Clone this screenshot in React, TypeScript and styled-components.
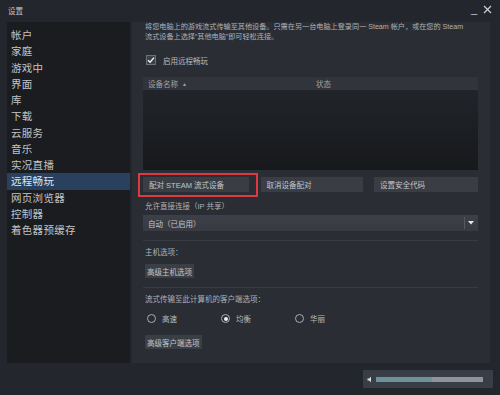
import styled, { createGlobalStyle } from "styled-components";

const GlobalStyle = createGlobalStyle`
  html, body {
    margin: 0;
    padding: 0;
    background: #22252b;
  }
  body {
    font-family: "Liberation Sans", "Noto Sans CJK SC", sans-serif;
    color: #b9bcc1;
  }
`;

const Window = styled.div`
  width: 500px;
  height: 395px;
  display: flex;
  flex-direction: column;
  background: #23262c;
  overflow: hidden;
`;

const TitleBar = styled.div`
  height: 22px;
  display: flex;
  align-items: center;
  justify-content: space-between;
  padding: 0 8px 2px 8px;
  box-sizing: border-box;
  font-size: 7.5px;
  color: #c3c5c9;
`;

const WinControls = styled.div`
  display: flex;
  align-items: center;
  gap: 6px;
  color: #c9cbcf;
  font-size: 11px;
  margin-top: -2px;
`;

const Body = styled.div`
  flex: 1;
  display: flex;
  gap: 2px;
  padding: 0 10px 0 7px;
  min-height: 0;
`;

const Sidebar = styled.ul`
  list-style: none;
  margin: 0;
  padding: 5px 0 0;
  width: 123px;
  background: #1a1c20;
`;

const NavItem = styled.li<{ $active?: boolean }>`
  height: 16.25px;
  line-height: 16.25px;
  padding-left: 4px;
  font-size: 10.5px;
  letter-spacing: 0.3px;
  color: ${(p) => (p.$active ? "#dfe3e8" : "#c2c4c8")};
  background: ${(p) => (p.$active ? "#29405f" : "transparent")};
`;

const Content = styled.div`
  flex: 1;
  background: #2a2d34;
  padding: 0 12px 0 11px;
  display: flex;
  flex-direction: column;
  align-items: stretch;
  font-size: 7.5px;
  color: #aeb1b6;
  white-space: nowrap;
`;

const Desc = styled.p`
  margin: 0 0 0 2px;
  line-height: 10px;
  font-size: 7.2px;
  letter-spacing: -0.05px;
`;

const Label = styled.div<{ $mt: number }>`
  margin: ${(p) => p.$mt}px 0 0 2px;
  line-height: 10px;
`;

const CheckRow = styled.label`
  margin: 13px 0 0 3px;
  height: 10px;
  display: flex;
  align-items: center;
  gap: 7px;
  color: #b7babf;
`;

const CheckBox = styled.span`
  width: 10px;
  height: 10px;
  box-sizing: border-box;
  background: #3c4048;
  border: 1px solid #6b7079;
  display: flex;
  align-items: center;
  justify-content: center;
`;

const Table = styled.div`
  margin-top: 12px;
  display: flex;
  flex-direction: column;
`;

const TableHead = styled.div`
  height: 13px;
  display: grid;
  grid-template-columns: 168px 1fr;
  align-items: center;
  background: #31343b;
  padding-left: 5px;
  color: #9ea2a8;
`;

const TableBody = styled.div`
  height: 80px;
  background: linear-gradient(#212429, #17191c);
`;

const SortArrow = styled.span`
  font-size: 5px;
  margin-left: 4px;
  vertical-align: 1px;
`;

const ButtonRow = styled.div`
  margin-top: 7px;
  display: grid;
  grid-template-columns: 106px 102px 104px;
  justify-content: space-between;
`;

const Button = styled.button<{ $marked?: boolean }>`
  position: relative;
  height: 15px;
  border: none;
  background: #3a3d44;
  color: #c3c6cb;
  font-family: inherit;
  font-size: 7.5px;
  text-align: left;
  white-space: nowrap;
  padding: 0 0 0 6px;
  &::after {
    content: "";
    display: ${(p) => (p.$marked ? "block" : "none")};
    position: absolute;
    left: -5px;
    right: -9px;
    top: -4px;
    bottom: -5px;
    border: 2px solid #dc3a40;
  }
`;

const SmallButton = styled(Button)<{ $mt: number }>`
  align-self: flex-start;
  height: 14px;
  margin: ${(p) => p.$mt}px 0 0 2px;
  padding: 0 2px;
  background: #3a3e45;
`;

const Select = styled.div`
  margin-top: 3px;
  height: 16px;
  display: flex;
  align-items: center;
  background: linear-gradient(#3d4048, #373a41);
  color: #c1c4c9;
`;

const SelectValue = styled.span`
  flex: 1;
  padding-left: 5px;
`;

const SelectArrow = styled.span`
  width: 12px;
  height: 12px;
  display: flex;
  align-items: center;
  justify-content: center;
  border-left: 1px solid #55585f;
  margin-right: 1px;
`;

const Divider = styled.hr<{ $mt: number }>`
  margin: ${(p) => p.$mt}px 0 0;
  border: none;
  height: 1px;
  background: #373a41;
`;

const RadioRow = styled.div`
  margin-top: 8px;
  height: 10px;
  display: grid;
  grid-template-columns: 74px 74px 1fr;
  padding-left: 4px;
`;

const RadioOption = styled.label`
  display: flex;
  align-items: center;
  gap: 6px;
  color: #b7babf;
`;

const RadioDot = styled.span<{ $on?: boolean }>`
  width: 9px;
  height: 9px;
  box-sizing: border-box;
  border-radius: 50%;
  border: 1.3px solid #a9adb3;
  display: flex;
  align-items: center;
  justify-content: center;
  &::after {
    content: "";
    width: 4px;
    height: 4px;
    border-radius: 50%;
    background: #f2f3f5;
    display: ${(p) => (p.$on ? "block" : "none")};
  }
`;

const Footer = styled.div`
  height: 32px;
  display: flex;
  justify-content: flex-end;
  padding: 7px 7px 0 0;
  box-sizing: border-box;
`;

const Progress = styled.div`
  width: 130px;
  height: 18px;
  background: #393d45;
  display: flex;
  align-items: center;
  gap: 3px;
  padding: 0 10px 0 4px;
  box-sizing: border-box;
`;

const Track = styled.div`
  flex: 1;
  height: 5px;
  background: #8d949e;
  display: flex;
`;

const Fill = styled.div`
  height: 100%;
  background: #6c9498;
`;

const navItems = [
  "帐户",
  "家庭",
  "游戏中",
  "界面",
  "库",
  "下载",
  "云服务",
  "音乐",
  "实况直播",
  "远程畅玩",
  "网页浏览器",
  "控制器",
  "着色器预缓存",
];

export default function App() {
  const progress = 52;
  return (
    <>
      <GlobalStyle />
      <Window>
        <TitleBar>
          <span>设置</span>
          <WinControls>
            <span>_</span>
            <svg width="9" height="9" viewBox="0 0 9 9">
              <path d="M1 1 L8 8 M8 1 L1 8" stroke="#c9cbcf" strokeWidth="1.3" />
            </svg>
          </WinControls>
        </TitleBar>
        <Body>
          <Sidebar>
            {navItems.map((n) => (
              <NavItem key={n} $active={n === "远程畅玩"}>
                {n}
              </NavItem>
            ))}
          </Sidebar>
          <Content>
            <Desc>
              将您电脑上的游戏流式传输至其他设备。只需在另一台电脑上登录同一 Steam 帐户，或在您的 Steam
              <br />
              流式设备上选择“其他电脑”即可轻松连接。
            </Desc>
            <CheckRow>
              <CheckBox>
                <svg width="8" height="8" viewBox="0 0 8 8">
                  <path d="M1 4.2 L3.1 6.3 L7 1.6" fill="none" stroke="#f4f5f6" strokeWidth="1.4" />
                </svg>
              </CheckBox>
              启用远程畅玩
            </CheckRow>
            <Table>
              <TableHead>
                <span>
                  设备名称<SortArrow>▲</SortArrow>
                </span>
                <span>状态</span>
              </TableHead>
              <TableBody />
            </Table>
            <ButtonRow>
              <Button $marked>配对 STEAM 流式设备</Button>
              <Button>取消设备配对</Button>
              <Button>设置安全代码</Button>
            </ButtonRow>
            <Label $mt={10}>允许直接连接（IP 共享）</Label>
            <Select>
              <SelectValue>自动（已启用）</SelectValue>
              <SelectArrow>
                <svg width="6" height="4" viewBox="0 0 6 4">
                  <path d="M0 0 H6 L3 3.5 Z" fill="#e6e7e9" />
                </svg>
              </SelectArrow>
            </Select>
            <Divider $mt={9} />
            <Label $mt={7}>主机选项：</Label>
            <SmallButton $mt={6}>高级主机选项</SmallButton>
            <Divider $mt={9} />
            <Label $mt={7}>流式传输至此计算机的客户端选项：</Label>
            <RadioRow>
              <RadioOption>
                <RadioDot />
                高速
              </RadioOption>
              <RadioOption>
                <RadioDot $on />
                均衡
              </RadioOption>
              <RadioOption>
                <RadioDot />
                华丽
              </RadioOption>
            </RadioRow>
            <SmallButton $mt={12}>高级客户端选项</SmallButton>
          </Content>
        </Body>
        <Footer>
          <Progress>
            <svg width="6" height="7" viewBox="0 0 6 7">
              <path d="M0.5 2.5 H2 L4 0.8 V6.2 L2 4.5 H0.5 Z" fill="#d8dadd" />
            </svg>
            <Track>
              <Fill style={{ width: `${progress}%` }} />
            </Track>
          </Progress>
        </Footer>
      </Window>
    </>
  );
}
